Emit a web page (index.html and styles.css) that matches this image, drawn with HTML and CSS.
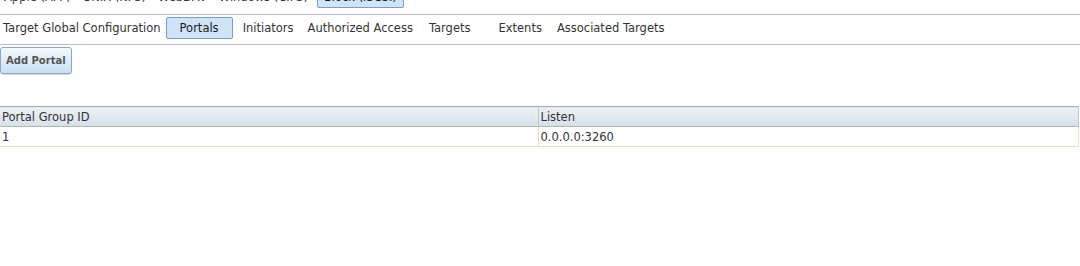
FILE: index.html
```html
<!DOCTYPE html>
<html lang="en">
<head>
  <meta charset="UTF-8" />
  <title>Block (iSCSI) - Portals</title>
  <link rel="stylesheet" href="styles.css">
</head>
<body>

  <!-- Sharing type tabs -->
  <div class="tabbar top">
    <span class="tab">Apple (AFP)</span>
    <span class="tab">UNIX (NFS)</span>
    <span class="tab">WebDAV</span>
    <span class="tab">Windows (CIFS)</span>
    <span class="tab active">Block (iSCSI)</span>
  </div>

  <!-- iSCSI sub tabs -->
  <div class="tabbar sub">
    <span class="tab first">Target Global Configuration</span>
    <span class="tab active">Portals</span>
    <span class="tab">Initiators</span>
    <span class="tab">Authorized Access</span>
    <span class="tab targets">Targets</span>
    <span class="tab extents">Extents</span>
    <span class="tab">Associated Targets</span>
  </div>

  <div class="toolbar">
    <button class="btn">Add Portal</button>
  </div>

  <table class="grid">
    <thead>
      <tr>
        <th class="col-id">Portal Group ID</th>
        <th>Listen</th>
      </tr>
    </thead>
    <tbody>
      <tr>
        <td>1</td>
        <td>0.0.0.0:3260</td>
      </tr>
    </tbody>
  </table>

</body>
</html>
```

FILE: styles.css
```css
* {
  box-sizing: border-box;
}
body {
  margin: 0;
  font-family: 'DejaVu Sans', Verdana, sans-serif;
  font-size: 11.5px;
  color: #333;
  background: #fff;
  overflow: hidden;
}

/* Tabs */
.tabbar {
  display: flex;
  border-bottom: 1px solid #b5bccb;
}
.tabbar.top {
  margin-top: -14px;
  height: 29px;
  align-items: flex-end;
  padding-bottom: 6px;
}
.tabbar.top .tab {
  padding: 0 5px;
}
.tabbar.top .tab:first-child {
  padding-left: 3px;
}
.tabbar.top .tab.active {
  padding: 0 6px;
  margin: 0 0 0 3px;
}
.tabbar.sub {
  height: 30px;
  align-items: flex-start;
  padding-top: 2px;
}
.tab {
  line-height: 20px;
  padding: 0 6px;
  border: 1px solid transparent;
  border-radius: 2px;
  white-space: nowrap;
  cursor: pointer;
}
.tab.first {
  padding: 0 3px 0 2px;
}
.tab.active {
  background: #cfe4f8;
  border-color: #7d9ec0;
  padding: 0 13px;
  margin: 0 3px 0 1px;
  color: #1a1a1a;
}
.tab.targets {
  padding: 0 11px 0 8px;
}
.tab.extents {
  padding: 0 7px 0 15px;
}

/* Toolbar */
.toolbar {
  padding-top: 2px;
  height: 61px;
}
.btn {
  font-family: inherit;
  font-size: 10px;
  font-weight: bold;
  color: #555;
  height: 27px;
  padding: 0 5px;
  border: 1px solid #8fa6c2;
  border-radius: 3px;
  background: linear-gradient(#f3f8fe, #cadff4);
  box-shadow: 0 1px 1px rgba(0, 0, 0, 0.15);
  cursor: pointer;
}

/* Grid */
.grid {
  width: 1079px;
  border-collapse: collapse;
  table-layout: fixed;
}
.grid th {
  text-align: left;
  font-weight: normal;
  height: 20px;
  padding: 0 2px;
  background: linear-gradient(#edf1f6, #d6dfe9);
  border-top: 1px solid #a9a9a9;
  border-bottom: 1px solid #b4b4b4;
  border-right: 1px solid #c4c8ce;
}
.grid th.col-id {
  width: 538px;
}
.grid td {
  height: 20px;
  padding: 0 2px;
  border-bottom: 1px solid #f0dcc8;
  border-right: 1px solid #f0dcc8;
}
```
